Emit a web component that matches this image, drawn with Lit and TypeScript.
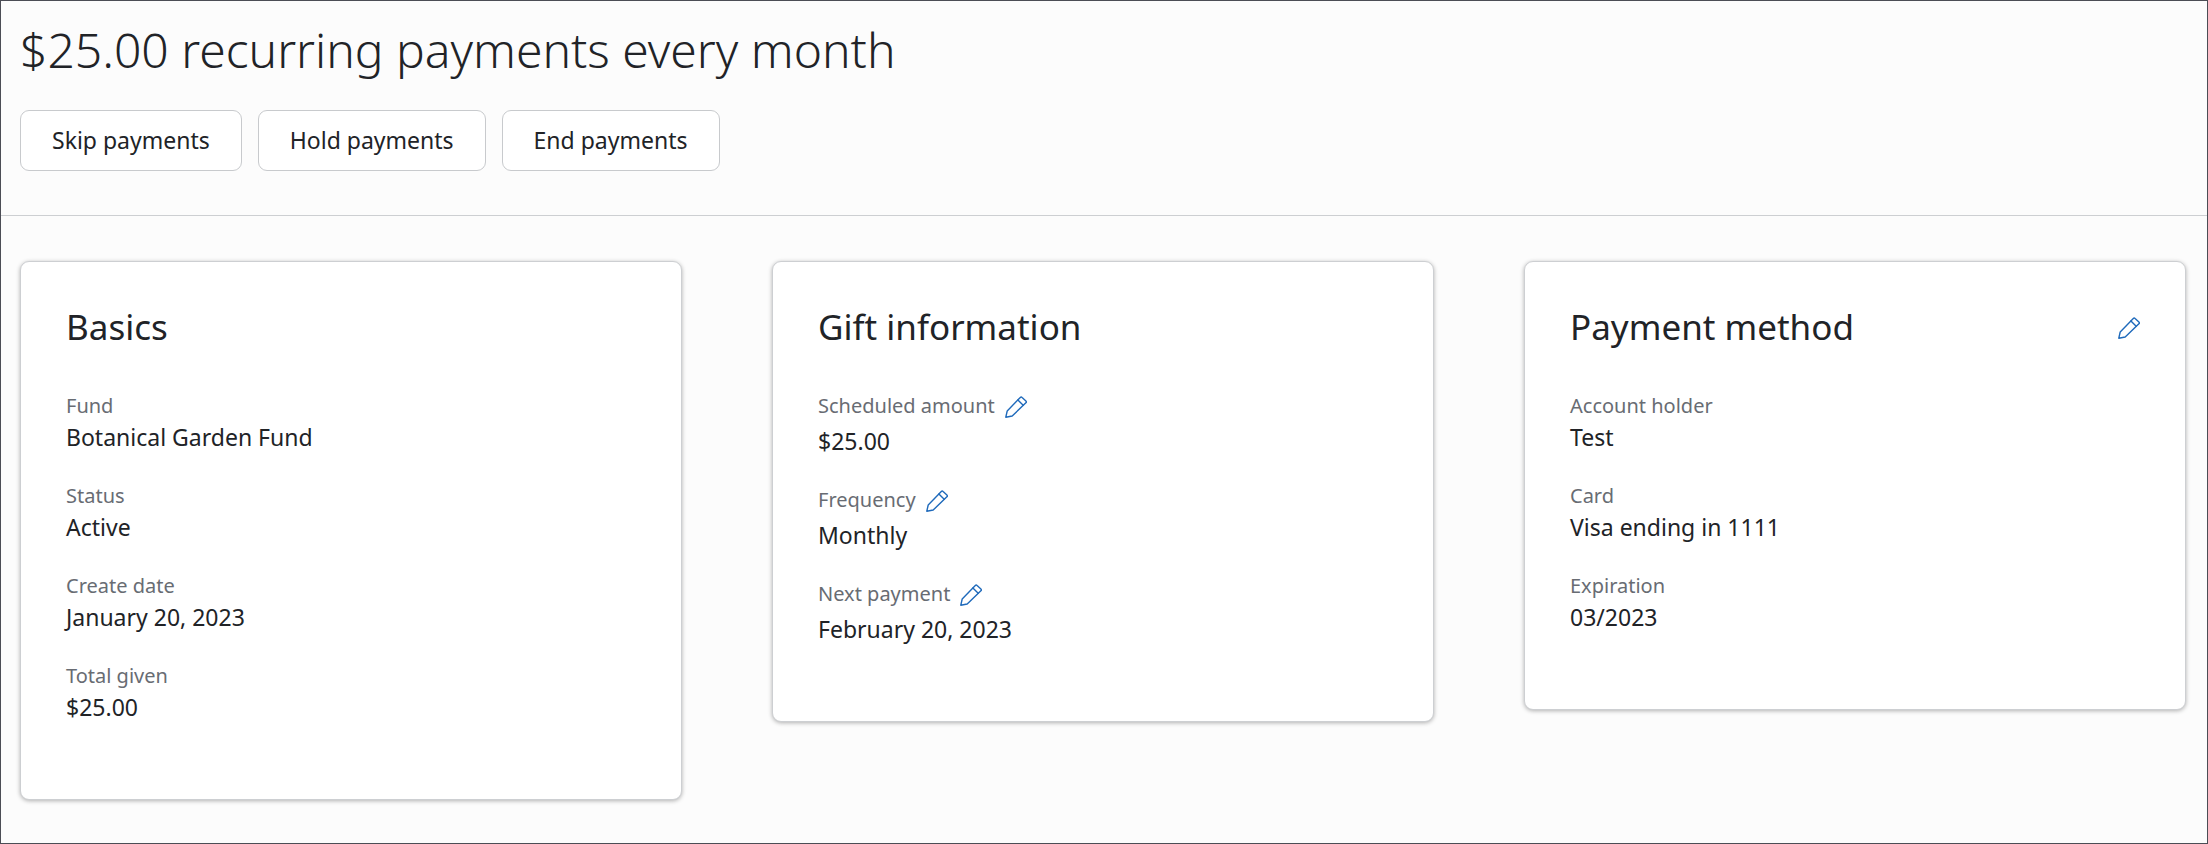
import { LitElement, html, css, nothing } from "lit";
import { customElement, property } from "lit/decorators.js";

interface Field {
  label: string;
  value: string;
  editable?: boolean;
}

interface Card {
  title: string;
  editable?: boolean;
  fields: Field[];
}

const actions = ["Skip payments", "Hold payments", "End payments"];

const cards: Card[] = [
  {
    title: "Basics",
    fields: [
      { label: "Fund", value: "Botanical Garden Fund" },
      { label: "Status", value: "Active" },
      { label: "Create date", value: "January 20, 2023" },
      { label: "Total given", value: "$25.00" },
    ],
  },
  {
    title: "Gift information",
    fields: [
      { label: "Scheduled amount", value: "$25.00", editable: true },
      { label: "Frequency", value: "Monthly", editable: true },
      { label: "Next payment", value: "February 20, 2023", editable: true },
    ],
  },
  {
    title: "Payment method",
    editable: true,
    fields: [
      { label: "Account holder", value: "Test" },
      { label: "Card", value: "Visa ending in 1111" },
      { label: "Expiration", value: "03/2023" },
    ],
  },
];

@customElement("edit-button")
class EditButton extends LitElement {
  @property() label = "";

  static styles = css`
    :host {
      display: flex;
      padding-top: 2px;
    }
    .edit {
      display: flex;
      margin: 0;
      padding: 0;
      border: 0;
      background: none;
      color: #1f6abb;
      cursor: pointer;
    }
    .icon {
      display: block;
      width: 22px;
      height: 22px;
    }
  `;

  render() {
    return html`<button class="edit" type="button" aria-label=${this.label}>
      <svg class="icon" viewBox="0 0 22 22" fill="none" stroke="currentColor" stroke-width="1.4" stroke-linejoin="round" stroke-linecap="round" aria-hidden="true">
        <path d="M0.8 21.2 L2.2 15 L15.3 1.4 Q16.2 0.5 17.1 1.4 L20.9 5 Q21.8 5.9 20.9 6.8 L7.2 20 Z" />
        <path d="M12.9 3.9 L18.2 9.2" />
      </svg>
    </button>`;
  }
}

@customElement("detail-card")
class DetailCard extends LitElement {
  @property({ attribute: false }) card!: Card;

  static styles = css`
    :host {
      display: block;
    }
    .card {
      box-sizing: border-box;
      padding: 42px 45px 76px;
      border: 1px solid #cdcfd2;
      border-radius: 9px;
      background: #fff;
      box-shadow: 0 1px 4px rgba(0, 0, 0, 0.3);
    }
    .header {
      display: flex;
      align-items: center;
      justify-content: space-between;
      margin-bottom: 41px;
    }
    .title {
      margin: 0;
      font-size: 35px;
      line-height: 46px;
      font-weight: 400;
    }
    .fields {
      display: flex;
      flex-direction: column;
      gap: 28px;
      margin: 0;
    }
    .label {
      display: flex;
      align-items: center;
      gap: 10px;
      color: #686c73;
      font-size: 20px;
      line-height: 30px;
    }
    .editable .label {
      padding-bottom: 4px;
    }
    .value {
      margin: 0;
      font-size: 23px;
      line-height: 32px;
    }
  `;

  render() {
    const { title, editable, fields } = this.card;
    return html`<section class="card">
      <header class="header">
        <h2 class="title">${title}</h2>
        ${editable ? html`<edit-button label="Edit ${title.toLowerCase()}"></edit-button>` : nothing}
      </header>
      <dl class="fields">
        ${fields.map(
          (f) => html`<div class=${f.editable ? "field editable" : "field"}>
            <dt class="label">
              ${f.label}
              ${f.editable ? html`<edit-button label="Edit ${f.label.toLowerCase()}"></edit-button>` : nothing}
            </dt>
            <dd class="value">${f.value}</dd>
          </div>`
        )}
      </dl>
    </section>`;
  }
}

@customElement("app-root")
class AppRoot extends LitElement {
  static styles = css`
    :host {
      display: block;
      box-sizing: border-box;
      min-height: 100vh;
      border: 1px solid #4b4d55;
      background: #fcfcfc;
      color: #212327;
      font-family: "Noto Sans", "Open Sans", sans-serif;
    }
    .top {
      padding: 16px 21px 44px 19px;
      border-bottom: 1px solid #cdcfd2;
    }
    .heading {
      margin: 0 0 27px;
      font-size: 48px;
      line-height: 66px;
      font-weight: 300;
    }
    .actions {
      display: flex;
      flex-wrap: wrap;
      gap: 16px;
    }
    .action {
      margin: 0;
      padding: 14px 31px;
      border: 1px solid #c8cacd;
      border-radius: 9px;
      background: #fff;
      color: inherit;
      font-family: inherit;
      font-size: 23px;
      line-height: 31px;
      cursor: pointer;
    }
    .cards {
      display: grid;
      grid-template-columns: repeat(3, minmax(0, 1fr));
      align-items: start;
      gap: 90px;
      padding: 45px 21px 42px 19px;
    }
  `;

  render() {
    return html`
      <header class="top">
        <h1 class="heading">$25.00 recurring payments every month</h1>
        <div class="actions">
          ${actions.map((a) => html`<button class="action" type="button">${a}</button>`)}
        </div>
      </header>
      <main class="cards">
        ${cards.map((card) => html`<detail-card .card=${card}></detail-card>`)}
      </main>
    `;
  }
}
